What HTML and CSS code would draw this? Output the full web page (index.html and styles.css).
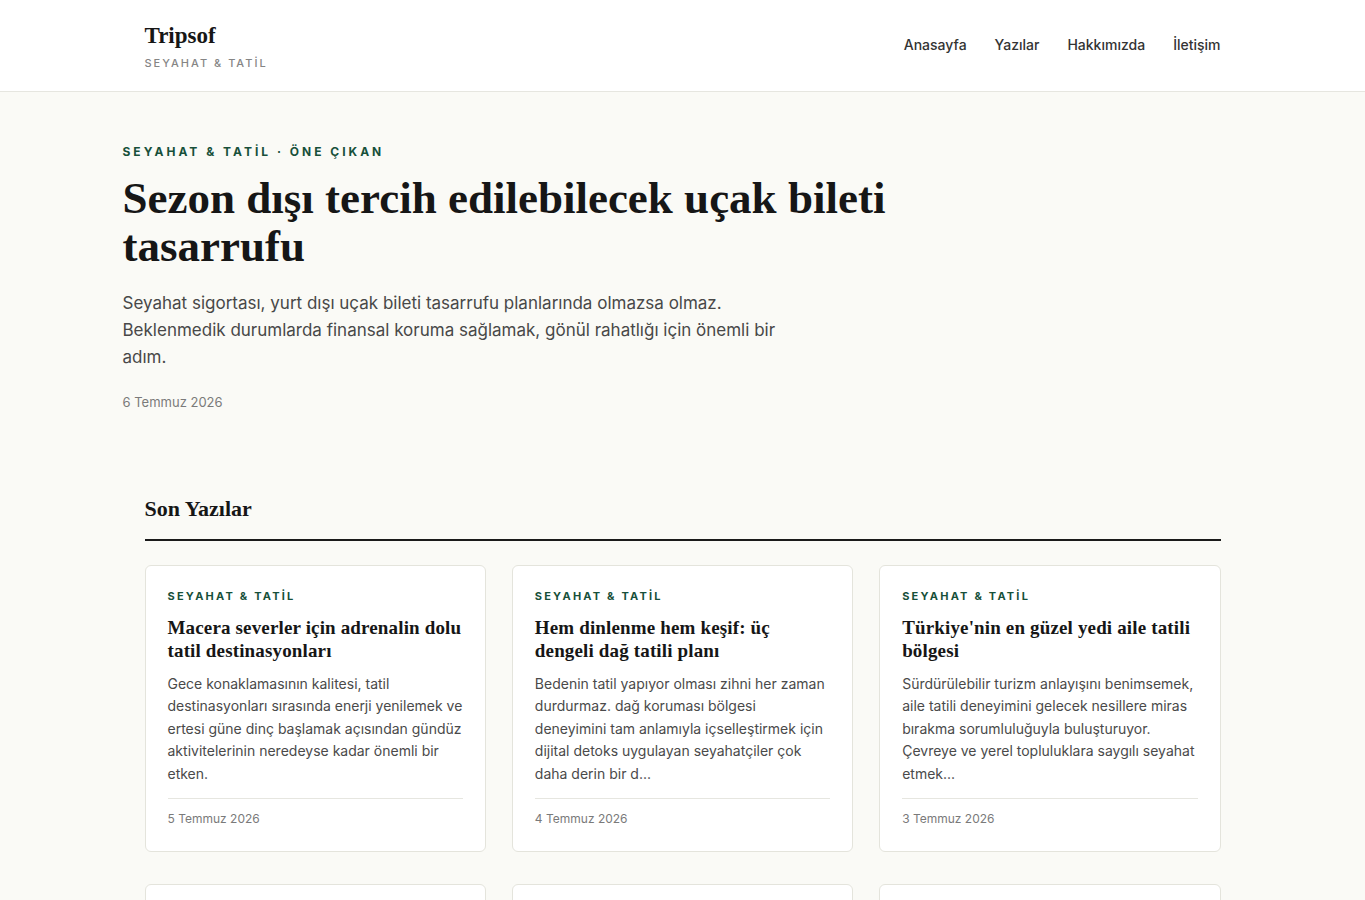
FILE: index.html
```html
<!DOCTYPE html>
<html lang="tr">
  <head>
    <meta charset="UTF-8" />
    <meta name="viewport" content="width=device-width, initial-scale=1.0" />
    <title>Tripsof - Seyahat &amp; Tatil</title>
    <link rel="stylesheet" href="styles.css">
  </head>
  <body>
    <header class="site-header">
      <div class="wrap header-inner">
        <a class="brand" href="#">
          <span class="brand-name">Tripsof</span>
          <span class="brand-tag">Seyahat &amp; Tatil</span>
        </a>
        <nav class="main-nav">
          <a href="#">Anasayfa</a>
          <a href="#">Yazılar</a>
          <a href="#">Hakkımızda</a>
          <a href="#">İletişim</a>
        </nav>
      </div>
    </header>

    <main>
      <!-- Featured post -->
      <section class="hero">
        <p class="eyebrow">Seyahat &amp; Tatil · Öne Çıkan</p>
        <h1 class="hero-title">Sezon dışı tercih edilebilecek uçak bileti tasarrufu</h1>
        <p class="hero-lead">Seyahat sigortası, yurt dışı uçak bileti tasarrufu planlarında olmazsa olmaz. Beklenmedik durumlarda finansal koruma sağlamak, gönül rahatlığı için önemli bir adım.</p>
        <p class="hero-date">6 Temmuz 2026</p>
      </section>

      <!-- Latest posts -->
      <section class="wrap latest">
        <h2 class="section-title">Son Yazılar</h2>
        <div class="post-grid">
          <article class="post-card">
            <p class="card-cat">Seyahat &amp; Tatil</p>
            <h3 class="card-title">Macera severler için adrenalin dolu tatil destinasyonları</h3>
            <p class="card-text">Gece konaklamasının kalitesi, tatil destinasyonları sırasında enerji yenilemek ve ertesi güne dinç başlamak açısından gündüz aktivitelerinin neredeyse kadar önemli bir etken.</p>
            <p class="card-date">5 Temmuz 2026</p>
          </article>
          <article class="post-card">
            <p class="card-cat">Seyahat &amp; Tatil</p>
            <h3 class="card-title">Hem dinlenme hem keşif: üç dengeli dağ tatili planı</h3>
            <p class="card-text">Bedenin tatil yapıyor olması zihni her zaman durdurmaz. dağ koruması bölgesi deneyimini tam anlamıyla içselleştirmek için dijital detoks uygulayan seyahatçiler çok daha derin bir d...</p>
            <p class="card-date">4 Temmuz 2026</p>
          </article>
          <article class="post-card">
            <p class="card-cat">Seyahat &amp; Tatil</p>
            <h3 class="card-title">Türkiye'nin en güzel yedi aile tatili bölgesi</h3>
            <p class="card-text">Sürdürülebilir turizm anlayışını benimsemek, aile tatili deneyimini gelecek nesillere miras bırakma sorumluluğuyla buluşturuyor. Çevreye ve yerel topluluklara saygılı seyahat etmek...</p>
            <p class="card-date">3 Temmuz 2026</p>
          </article>
          <article class="post-card">
            <p class="card-cat">Seyahat &amp; Tatil</p>
            <h3 class="card-title">Kış aylarında keşfedilecek sakin sahil kasabaları</h3>
            <p class="card-text">Kalabalıktan uzak, sessiz bir deniz kenarı tatili için sezon dışı dönemler hem bütçe hem huzur açısından eşsiz fırsatlar sunuyor.</p>
            <p class="card-date">2 Temmuz 2026</p>
          </article>
          <article class="post-card">
            <p class="card-cat">Seyahat &amp; Tatil</p>
            <h3 class="card-title">Uzun yol için valiz hazırlamanın pratik yolları</h3>
            <p class="card-text">Doğru planlanmış bir valiz, seyahatin ilk gününden son gününe kadar zaman ve enerji kazandırır.</p>
            <p class="card-date">1 Temmuz 2026</p>
          </article>
          <article class="post-card">
            <p class="card-cat">Seyahat &amp; Tatil</p>
            <h3 class="card-title">Şehir turlarında yürüyerek keşfetmenin keyfi</h3>
            <p class="card-text">Bir şehri gerçekten tanımanın en iyi yolu, sokaklarını adım adım dolaşmak ve yerel hayatın ritmine uyum sağlamaktır.</p>
            <p class="card-date">30 Haziran 2026</p>
          </article>
        </div>
      </section>
    </main>
  </body>
</html>
```

FILE: styles.css
```css
/* Reset and base */
* {
  margin: 0;
  padding: 0;
  box-sizing: border-box;
}

body {
  font-family: Inter, "Noto Sans", Arial, sans-serif;
  background-color: #fafaf6;
  color: #1a1a1a;
  line-height: 1.5;
}

a {
  color: inherit;
  text-decoration: none;
}

.wrap {
  max-width: 1076px;
  margin: 0 auto;
}

/* Header */
.site-header {
  background-color: #fff;
  border-bottom: 1px solid #e6e6e0;
}

.header-inner {
  height: 91px;
  display: flex;
  align-items: center;
  justify-content: space-between;
}

.brand {
  display: flex;
  flex-direction: column;
  padding-top: 2px;
}

.brand-name {
  font-family: "Liberation Serif", "Times New Roman", serif;
  font-weight: 700;
  font-size: 23px;
  line-height: 30px;
  color: #161616;
}

.brand-tag {
  margin-top: 4px;
  font-size: 11px;
  font-weight: 500;
  letter-spacing: 2px;
  text-transform: uppercase;
  color: #858585;
}

.main-nav {
  display: flex;
  gap: 28px;
  margin-bottom: 2px;
}

.main-nav a {
  font-size: 14px;
  font-weight: 500;
  color: #333;
}

/* Featured post */
.hero {
  max-width: 1120px;
  margin: 0 auto;
  padding: 52px 0 81px;
}

.eyebrow {
  font-size: 12px;
  font-weight: 700;
  letter-spacing: 3px;
  text-transform: uppercase;
  color: #17503a;
  line-height: 16px;
}

.hero-title {
  max-width: 800px;
  margin-top: 14px;
  font-family: "Liberation Serif", "Times New Roman", serif;
  font-weight: 700;
  font-size: 45px;
  line-height: 48px;
  color: #161616;
}

.hero-lead {
  max-width: 680px;
  margin-top: 20px;
  font-size: 17px;
  line-height: 27px;
  color: #484848;
}

.hero-date {
  margin-top: 22px;
  font-size: 13px;
  color: #7a7a7a;
}

/* Latest posts */
.section-title {
  font-family: "Liberation Serif", "Times New Roman", serif;
  font-weight: 700;
  font-size: 22px;
  line-height: 30px;
  padding-bottom: 15px;
  border-bottom: 2px solid #1a1a1a;
  color: #161616;
}

.post-grid {
  margin-top: 24px;
  display: grid;
  grid-template-columns: repeat(3, 1fr);
  column-gap: 26px;
  row-gap: 32px;
  padding-bottom: 40px;
}

.post-card {
  background-color: #fff;
  border: 1px solid #e4e4dc;
  border-radius: 6px;
  padding: 23px 22px 23px;
  display: flex;
  flex-direction: column;
}

.card-cat {
  font-size: 11px;
  font-weight: 700;
  letter-spacing: 2.2px;
  text-transform: uppercase;
  color: #17503a;
  line-height: 14px;
}

.card-title {
  margin-top: 13px;
  font-family: "Liberation Serif", "Times New Roman", serif;
  font-weight: 700;
  font-size: 19px;
  line-height: 23px;
  letter-spacing: 0.15px;
  color: #161616;
}

.card-text {
  margin-top: 11px;
  font-size: 14px;
  line-height: 22.5px;
  color: #4a4a4a;
  flex: 1;
}

.card-date {
  margin-top: 13px;
  padding-top: 11px;
  border-top: 1px solid #e6e6e0;
  font-size: 12px;
  color: #7a7a7a;
}
```
